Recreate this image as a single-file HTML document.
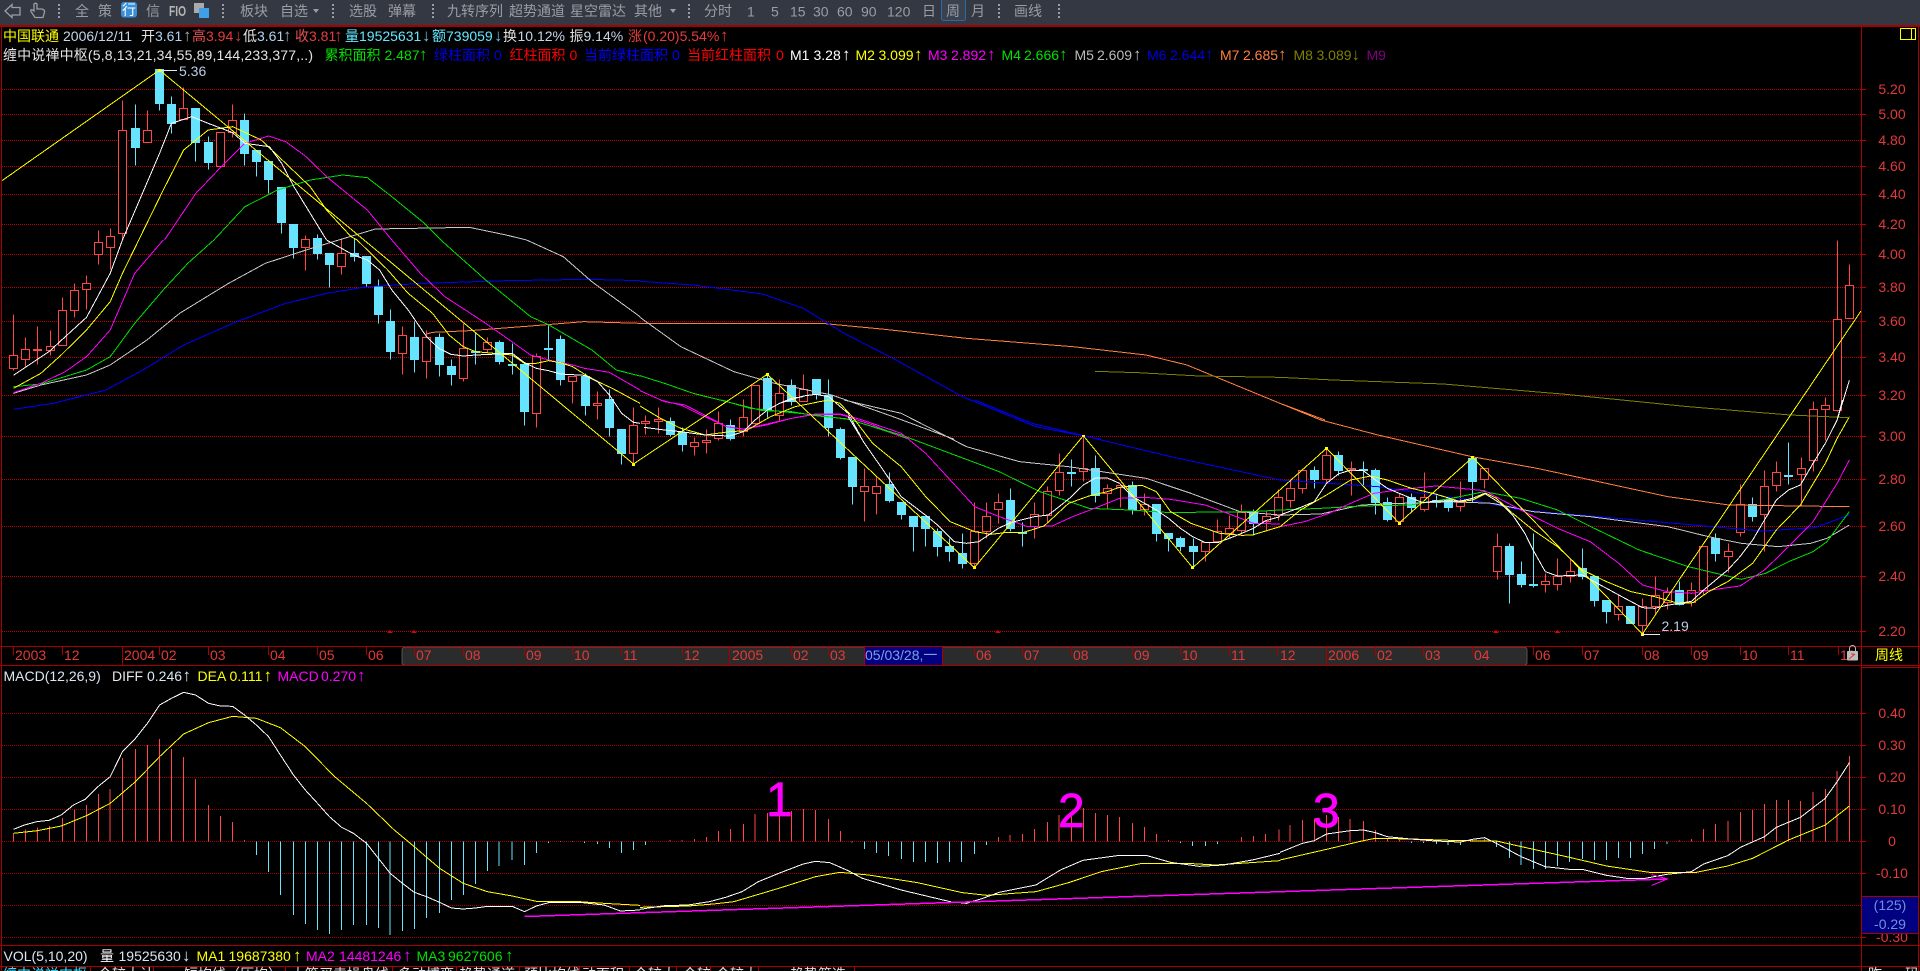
<!DOCTYPE html>
<html><head><meta charset="utf-8"><title>中国联通</title>
<style>
html,body{margin:0;padding:0;background:#000;width:1920px;height:971px;overflow:hidden}
svg{display:block;font-family:"Liberation Sans","Noto Sans CJK SC",sans-serif;font-size:14px}
.l{fill:none;vector-effect:non-scaling-stroke;stroke-width:1;shape-rendering:crispEdges}
.b{fill:none;vector-effect:non-scaling-stroke;stroke-width:1;shape-rendering:crispEdges}
.c{shape-rendering:crispEdges}
.tb text{fill:#9a9da3}
.ax text{fill:#e23a3a}
.yl text{fill:#e23a3a;text-anchor:middle}
.a{font-size:17px}
</style></head><body>
<svg width="1920" height="971" viewBox="0 0 1920 971" xmlns="http://www.w3.org/2000/svg">
<rect width="1920" height="971" fill="#000"/>
<!-- toolbar -->
<rect width="1920" height="25" fill="#343842"/>
<g class="tb">
<path d="M5 11L12 4.500V7.500H20V15H12V17.500Z" fill="none" stroke="#9a9da3" stroke-width="1.300"/>
<path d="M35 17.500L31 11.500Q30 9.500 32 9.800L34 11V4Q35.500 2.500 37 4V9H42Q45 10 44.500 12L43 17.500Z" fill="none" stroke="#9a9da3" stroke-width="1.300"/>
<g stroke="#9a9da3" stroke-width="2" stroke-dasharray="2 2" class="c"><path d="M59 4V18M223 4V18M333 4V18M433 4V18M689 4V18M999 4V18M1059 4V18"/></g>
<text x="75" y="16">全</text><text x="98" y="16">策</text>
<rect x="121" y="2" width="16" height="15.500" rx="3" fill="#3a8fd8"/><text x="122" y="15" style="fill:#fff">行</text>
<text x="146" y="16">信</text>
<text x="169" y="16" font-weight="bold" textLength="17" lengthAdjust="spacingAndGlyphs" style="fill:#b5b5b5;font-size:15px">FIO</text>
<rect x="194" y="3" width="10" height="10" fill="#aaa"/><rect x="199" y="8" width="10" height="10" fill="#3ea0e8"/>
<text x="240" y="16">板块</text><text x="280" y="16">自选</text><path d="M313 9h6l-3 4z" fill="#9a9da3"/>
<text x="349" y="16">选股</text><text x="388" y="16">弹幕</text>
<text x="447" y="16">九转序列</text><text x="509" y="16">超势通道</text><text x="570" y="16">星空雷达</text><text x="634" y="16">其他</text>
<path d="M670 9h6l-3 4z" fill="#9a9da3"/>
<text x="704" y="16">分时</text><text x="747" y="16.500">1</text><text x="771" y="16.500">5</text><text x="790" y="16.500">15</text><text x="813" y="16.500">30</text><text x="837" y="16.500">60</text><text x="861" y="16.500">90</text><text x="887" y="16.500">120</text>
<text x="922" y="16">日</text>
<rect x="941.500" y="-2" width="24" height="22.500" rx="2" fill="#3a4250" stroke="#2d6aa8"/><text x="946" y="16">周</text>
<text x="971" y="16">月</text><text x="1014" y="16">画线</text>
</g>
<!-- time band -->
<rect x="402" y="647" width="1125" height="18.500" rx="3" fill="#2b2b2b" stroke="#555"/>
<rect x="864.500" y="647" width="78" height="18" fill="#000080"/>
<!-- grids -->
<g stroke="#c00000" stroke-dasharray="1 1" class="c" fill="none"><path d="M2 89.500H1861M2 114.500H1861M2 140.500H1861M2 166.500H1861M2 194.500H1861M2 224.500H1861M2 254.500H1861M2 287.500H1861M2 321.500H1861M2 357.500H1861M2 395.500H1861M2 436.500H1861M2 479.500H1861M2 526.500H1861M2 576.500H1861M2 631.500H1861"/></g>
<g stroke="#a00000" stroke-dasharray="1 1" class="c" fill="none"><path d="M2 713.500H1861M2 745.500H1861M2 777.500H1861M2 809.500H1861M2 841.500H1861M2 873.500H1861M2 905.500H1861M2 937.500H1861"/></g>
<g stroke="#c00000" class="c"><path d="M1861 89.500H1866M1861 114.500H1866M1861 140.500H1866M1861 166.500H1866M1861 194.500H1866M1861 224.500H1866M1861 254.500H1866M1861 287.500H1866M1861 321.500H1866M1861 357.500H1866M1861 395.500H1866M1861 436.500H1866M1861 479.500H1866M1861 526.500H1866M1861 576.500H1866M1861 631.500H1866M1861 713.500H1866M1861 745.500H1866M1861 777.500H1866M1861 809.500H1866M1861 841.500H1866M1861 873.500H1866M1861 905.500H1866M1861 937.500H1866"/></g>
<!-- candles -->
<g transform="translate(.5 .5)" class="c">
<path stroke="#ff4545" fill="none" d="M13 314V370M25 337V367M37 326V364M50 330V355M62 297V345M74 283V317M86 275V309M98 230V264M110 228V269M122 100V240M147 110V142M183 87V119M220 132V166M232 104V137M305 235V270M341 238V274M402 326V374M426 330V378M463 323V381M487 337V352M536 353V427M572 376V403M597 391V419M633 407V464M645 415V434M658 407V433M694 437V455M706 429V453M718 411V440M743 399V436M755 385V425M779 379V421M803 374V401M864 468V521M876 476V514M974 502V568M986 502V538M998 493V523M1034 502V538M1047 486V523M1059 453V495M1083 436V481M1107 484V509M1120 484V507M1144 493V515M1205 542V561M1217 519V541M1229 515V538M1241 504V534M1266 511V531M1278 489V520M1290 480V507M1302 468V493M1326 448V483M1351 461V495M1399 493V524M1424 472V511M1460 481V511M1484 468V488M1497 533V579M1545 573V592M1557 558V590M1570 558V582M1618 595V620M1642 598V634M1655 576V614M1667 587V609M1691 582V606M1703 546V595M1728 543V572M1740 484V536M1764 470V551M1776 461V491M1801 457V505M1813 401V471M1825 397V440M1837 240V411M1849 264V318"/>
<path stroke="#ff4545" fill="#000" d="M9 355h8V368h-8zM21 349h8V359h-8zM33 349h8V350h-8zM46 346h8V350h-8zM58 310h8V345h-8zM70 290h8V310h-8zM82 283h8V289h-8zM94 242h8V254h-8zM106 236h8V247h-8zM118 130h8V233h-8zM143 130h8V142h-8zM179 108h8V119h-8zM216 132h8V166h-8zM228 120h8V132h-8zM301 239h8V247h-8zM337 253h8V266h-8zM398 335h8V353h-8zM422 337h8V361h-8zM459 348h8V378h-8zM483 342h8V349h-8zM532 356h8V413h-8zM568 376h8V381h-8zM593 403h8V405h-8zM629 425h8V453h-8zM641 421h8V423h-8zM654 419h8V421h-8zM690 442h8V446h-8zM702 440h8V442h-8zM714 423h8V438h-8zM739 417h8V431h-8zM751 385h8V423h-8zM775 393h8V415h-8zM799 389h8V401h-8zM860 486h8V491h-8zM872 486h8V493h-8zM970 531h8V563h-8zM982 516h8V531h-8zM994 502h8V509h-8zM1030 514h8V526h-8zM1043 491h8V515h-8zM1055 472h8V490h-8zM1079 468h8V471h-8zM1103 488h8V493h-8zM1116 485h8V487h-8zM1140 504h8V509h-8zM1201 542h8V551h-8zM1213 531h8V541h-8zM1225 528h8V533h-8zM1237 512h8V530h-8zM1262 516h8V521h-8zM1274 497h8V515h-8zM1286 488h8V500h-8zM1298 470h8V488h-8zM1322 455h8V479h-8zM1347 468h8V470h-8zM1395 497h8V521h-8zM1420 497h8V509h-8zM1456 502h8V506h-8zM1480 468h8V479h-8zM1493 546h8V571h-8zM1541 581h8V584h-8zM1553 576h8V584h-8zM1566 571h8V576h-8zM1614 606h8V614h-8zM1638 606h8V625h-8zM1651 595h8V606h-8zM1663 592h8V602h-8zM1687 590h8V602h-8zM1699 546h8V590h-8zM1724 551h8V556h-8zM1736 504h8V532h-8zM1760 486h8V514h-8zM1772 472h8V485h-8zM1797 468h8V474h-8zM1809 409h8V460h-8zM1821 405h8V409h-8zM1833 319h8V410h-8zM1845 285h8V318h-8z"/>
<path stroke="#66e3ff" fill="#66e3ff" d="M135 104V165M131 128h8V147h-8zM159 69V110M155 69h8V103h-8zM171 96V133M167 104h8V123h-8zM195 108V161M191 108h8V142h-8zM208 136V169M204 142h8V162h-8zM244 113V165M240 120h8V153h-8zM256 150V176M252 150h8V161h-8zM268 161V193M264 161h8V179h-8zM281 187V233M277 187h8V222h-8zM293 224V258M289 224h8V247h-8zM317 234V259M313 238h8V253h-8zM329 253V287M325 253h8V264h-8zM354 238V261M350 253h8V256h-8zM366 256V287M362 256h8V283h-8zM378 279V323M374 286h8V314h-8zM390 309V359M386 321h8V351h-8zM414 321V372M410 337h8V359h-8zM439 333V376M435 337h8V364h-8zM451 359V385M447 366h8V374h-8zM475 332V364M471 351h8V352h-8zM499 340V364M495 342h8V361h-8zM512 343V374M508 364h8V365h-8zM524 364V425M520 364h8V411h-8zM548 325V360M544 348h8V349h-8zM560 335V385M556 339h8V379h-8zM585 373V415M581 376h8V405h-8zM609 389V436M605 399h8V427h-8zM621 429V464M617 429h8V453h-8zM670 417V436M666 421h8V434h-8zM682 427V451M678 432h8V444h-8zM730 419V440M726 425h8V438h-8zM767 374V417M763 378h8V409h-8zM791 379V405M787 385h8V401h-8zM816 379V399M812 379h8V394h-8zM828 379V436M824 395h8V427h-8zM840 427V459M836 429h8V457h-8zM852 457V504M848 457h8V486h-8zM889 472V502M885 484h8V500h-8zM901 502V519M897 502h8V514h-8zM913 516V551M909 516h8V526h-8zM925 516V546M921 516h8V528h-8zM937 528V556M933 531h8V546h-8zM949 538V561M945 546h8V551h-8zM962 533V568M958 553h8V563h-8zM1010 488V531M1006 500h8V528h-8zM1022 522V546M1018 532h8V533h-8zM1071 459V486M1067 472h8V473h-8zM1095 455V502M1091 468h8V495h-8zM1132 481V514M1128 485h8V509h-8zM1156 504V541M1152 504h8V533h-8zM1168 533V551M1164 533h8V538h-8zM1180 536V551M1176 538h8V546h-8zM1193 538V568M1189 546h8V551h-8zM1253 509V535M1249 512h8V523h-8zM1314 466V488M1310 470h8V479h-8zM1338 451V475M1334 455h8V470h-8zM1363 461V486M1359 469h8V470h-8zM1375 468V514M1371 470h8V502h-8zM1387 497V521M1383 502h8V519h-8zM1411 493V511M1407 497h8V507h-8zM1436 495V507M1432 500h8V502h-8zM1448 497V511M1444 499h8V507h-8zM1472 456V502M1468 458h8V481h-8zM1509 543V603M1505 546h8V574h-8zM1521 561V587M1517 574h8V584h-8zM1533 533V587M1529 584h8V585h-8zM1582 548V579M1578 568h8V576h-8zM1594 576V606M1590 576h8V600h-8zM1606 600V623M1602 600h8V611h-8zM1630 606V623M1626 606h8V623h-8zM1679 581V605M1675 590h8V604h-8zM1715 533V561M1711 538h8V553h-8zM1752 497V521M1748 504h8V516h-8zM1788 442V484M1784 475h8V476h-8z"/>
</g>
<!-- moving averages: groups share the same scale -->
<g transform="matrix(.40816 0 0 .33333 0 0)">
<polyline class="l" stroke="#c8c8c8" points="830,720 920,687 1150,682 1240,705 1290,720"/>
<polyline class="l" stroke="#00e000" points="524,720 600,620 680,570 760,540 840,525 900,533 960,590 1040,670 1080,720"/>
<polyline class="l" stroke="#ff00ff" points="403,720 480,580 550,490 600,430 658,408 700,425 750,470 800,530 900,630 960,720"/>
<polyline class="l" stroke="#ffff00" points="340,720 400,570 450,450 510,390 570,380 640,420 700,490 760,560 800,630 860,710 875,720"/>
<polyline class="l" stroke="#fff" points="300,720 391,460 420,370 470,350 510,370 570,398 600,430 660,440 690,490 720,560 800,720"/>
</g>
<g transform="matrix(.40816 0 0 .33333 0 240)">
<polyline class="l" stroke="#ff7f40" points="1045,282 1060,277 1150,272 1300,258 1430,245 1568,250"/>
<polyline class="l" stroke="#0000ff" points="33,508 130,490 260,450 350,390 450,315 580,245 700,190 800,160 900,140 1040,130 1240,122 1440,118 1568,122"/>
<polyline class="l" stroke="#c8c8c8" points="33,460 100,435 212,405 270,375 360,300 440,220 560,130 650,70 750,30 830,0"/>
<polyline class="l" stroke="#c8c8c8" points="1290,0 1380,50 1450,125 1568,230"/>
<polyline class="l" stroke="#00e000" points="33,440 100,432 212,390 270,350 330,250 400,150 460,70 524,0"/>
<polyline class="l" stroke="#00e000" points="1080,0 1190,120 1300,230 1345,255 1450,330 1510,390 1568,408"/>
<polyline class="l" stroke="#ff00ff" points="33,458 100,430 160,395 212,350 270,270 330,100 400,0"/>
<polyline class="l" stroke="#ff00ff" points="960,0 1030,100 1090,170 1190,250 1260,310 1300,345 1344,360 1403,375 1432,385 1493,397 1568,450"/>
<polyline class="l" stroke="#ffff00" points="33,445 100,400 150,345 212,270 270,185 300,100 340,0"/>
<polyline class="l" stroke="#ffff00" points="875,0 950,90 1000,160 1060,220 1100,285 1135,320 1165,335 1210,340 1255,345 1285,370 1314,370 1344,362 1373,368 1403,380 1435,405 1465,425 1500,445 1568,490"/>
<polyline class="l" stroke="#fff" points="33,406 120,335 160,290 212,232 270,100 300,0"/>
<polyline class="l" stroke="#fff" points="800,0 866,45 900,60 930,90 960,150 1000,210 1045,290 1075,325 1105,343 1135,348 1165,345 1255,340 1285,368 1314,385 1344,392 1373,402 1403,404 1432,406 1464,425 1493,465 1523,520 1552,547 1568,550"/>
</g>
<g transform="matrix(.40816 0 0 .33333 640 240)">
<polyline class="l" stroke="#ff7f40" points="0,250 445,250 600,268 800,295 1060,320 1240,345 1340,375 1568,490"/>
<polyline class="l" stroke="#808000" points="1115,394 1220,398 1370,408 1568,412"/>
<polyline class="l" stroke="#0000ff" points="0,124 130,135 300,162 400,205 500,280 620,355 790,470 970,560 1130,598"/>
<polyline class="l" stroke="#c8c8c8" points="0,232 100,320 230,395 330,430 470,465 620,530 770,598"/>
<polyline class="l" stroke="#00e000" points="0,407 60,430 130,460 212,485 300,512 371,515 430,527 510,537 600,572 660,598"/>
<polyline class="l" stroke="#ff00ff" points="0,452 60,485 110,495 150,520 212,560 253,567 300,555 371,535 430,523 490,523 570,555 640,590"/>
<polyline class="l" stroke="#fff" points="342,490 400,468 430,463 462,470 510,520 541,590"/>
</g>
<g transform="matrix(.40816 0 0 .33333 640 400)">
<polyline class="l" stroke="#0000ff" points="820,0 960,70 1086,107 1300,170 1568,240"/>
<polyline class="l" stroke="#c8c8c8" points="500,0 640,40 800,140 930,185 1050,200 1240,235 1350,280 1470,335 1568,345"/>
<polyline class="l" stroke="#00e000" points="200,0 270,25 350,35 430,45 510,58 640,105 760,160 880,215 980,275 1100,325 1200,330 1300,338 1400,336 1500,335 1568,330"/>
<polyline class="l" stroke="#ff00ff" points="50,0 100,15 150,45 212,80 253,88 310,75 371,55 430,42 490,42 540,58 640,100 700,160 760,240 820,320 880,350 950,380 1010,378 1060,350 1120,322 1175,295 1236,292 1300,298 1385,315 1440,340 1503,370 1568,372"/>
<polyline class="l" stroke="#ffff00" points="0,18 50,55 100,85 160,105 220,95 260,92 320,50 380,20 440,5 462,0 490,10 520,50 570,130 640,200 700,290 760,365 820,395 860,403 900,397 940,397 990,378 1050,310 1100,288 1145,275 1175,262 1230,256 1265,275 1300,335 1350,370 1420,400 1475,406 1500,405 1568,380"/>
<polyline class="l" stroke="#fff" points="10,82 60,90 100,95 160,105 220,108 253,95 282,60 312,30 342,10 371,-5 400,-10"/>
<polyline class="l" stroke="#fff" points="510,50 550,130 590,200 640,290 699,345 729,375 770,425 800,430 830,425 878,385 908,368 966,350 1000,345 1027,320 1057,290 1086,255 1116,234 1145,234 1175,250 1207,290 1265,330 1295,355 1324,385 1354,410 1385,428 1415,428 1444,415 1474,400 1503,385 1533,362 1568,350"/>
</g>
<g transform="matrix(.40816 0 0 .33333 1280 400)">
<polyline class="l" stroke="#ff7f40" points="0,10 100,60 240,105 470,170 630,205 950,290 1100,315 1395,320"/>
<polyline class="l" stroke="#0000ff" points="0,240 120,250 240,260 350,280 470,300 590,330 780,350 1060,380 1180,393 1310,383 1395,345"/>
<polyline class="l" stroke="#c8c8c8" points="0,345 100,342 200,315 300,310 420,305 520,310 620,335 760,350 950,380 1050,410 1130,430 1220,440 1300,430 1340,415 1395,375"/>
<polyline class="l" stroke="#00e000" points="0,330 100,325 200,318 320,315 420,295 500,275 590,295 680,330 770,385 880,450 1000,500 1130,538 1190,520 1246,485 1306,455 1340,425 1395,335"/>
<polyline class="l" stroke="#ff00ff" points="0,380 60,365 120,340 173,310 230,280 300,268 381,258 442,265 501,272 590,330 680,385 760,425 830,490 888,555 948,575 1008,580 1067,568 1127,558 1187,510 1246,440 1306,365 1365,250 1395,180"/>
<polyline class="l" stroke="#ffff00" points="0,380 50,330 114,285 173,240 222,228 263,240 322,265 381,282 442,305 472,300 505,280 530,295 570,340 620,390 680,440 741,510 800,545 860,575 918,590 979,611 1012,608 1050,575 1097,545 1158,490 1216,390 1275,315 1336,190 1365,115 1395,50"/>
<polyline class="l" stroke="#fff" points="0,345 55,320 84,305 114,250 143,222 173,210 204,212 234,240 263,265 292,280 322,295 351,308 381,303 413,303 442,303 472,295 501,280 540,310 570,345 600,400 620,450 650,515 680,528 741,525 770,545 830,585 888,623 918,625 948,616 1008,604 1038,570 1097,510 1127,470 1158,420 1187,360 1216,300 1246,270 1275,255 1306,190 1336,130 1365,60 1378,0"/>
</g>
<g transform="matrix(.40816 0 0 .33333 1280 220)">
<polyline class="l" stroke="#ff7f40" points="0,550 110,600"/>
<polyline class="l" stroke="#808000" points="0,472 130,480 400,492 700,523 1000,560 1250,585 1395,593"/>
<polyline class="l" stroke="#fff" points="1365,600 1395,481"/>
</g>
<!-- zigzag -->
<polyline class="c" fill="none" stroke="#ffff00" points="1.500,181 159.500,70 633.500,464 767.300,374.300 974.300,567.700 1083.300,435.700 1192.700,567.700 1326.500,448.300 1399.200,523 1472.700,457.300 1642.400,634 1861,311"/>
<g fill="#ffff00" class="c"><rect x="158" y="69" width="3" height="3"/><rect x="632" y="463" width="3" height="3"/><rect x="766" y="373" width="3" height="3"/><rect x="973" y="566" width="3" height="3"/><rect x="1082" y="435" width="3" height="2"/><rect x="1191" y="566" width="3" height="3"/><rect x="1325" y="447" width="3" height="3"/><rect x="1398" y="522" width="3" height="3"/><rect x="1471" y="456" width="3" height="3"/><rect x="1641" y="633" width="3" height="3"/></g>
<path d="M159 70.500H177M1642 634.500H1660" stroke="#e8e8e8" class="c"/>
<text x="179" y="76" fill="#b8cde6">5.36</text>
<text x="1661.500" y="631" fill="#b8cde6">2.19</text>
<g fill="#e00000"><path d="M998 630l3 3h-6zM1496 630l3 3h-6zM1557.500 630l3 3h-6zM390 630l3 3h-6zM414 630l3 3h-6z"/></g>
<!-- MACD bars -->
<g transform="matrix(.40816 0 0 .33333 0 640)">
<path class="b" stroke="#ff4545" d="M33 604V580M62 604V568M92 604V562M121 604V558M153 604V534M182 604V510M212 604V495M241 604V462M270 604V447M300 604V354M332 604V327M361 604V315M391 604V297M420 604V327M450 604V351M479 604V417M511 604V495M540 604V528M570 604V546M599 604V600"/>
<path class="b" stroke="#66e3ff" d="M628 604V645M658 604V696M687 604V765M719 604V825M748 604V852M778 604V870M807 604V882M837 604V870M866 604V855M898 604V855M927 604V864M956 604V885M986 604V873M1015 604V867M1045 604V834M1077 604V819M1106 604V780M1135 604V765M1165 604V732M1194 604V693M1223 604V678M1255 604V660M1285 604V675M1314 604V639M1344 604V609M1373 604V606M1403 604V606M1432 604V609M1464 604V612M1493 604V624M1523 604V639M1552 604V630"/>
<polyline class="l" stroke="#ffff00" points="33,580 92,572 150,558 212,527 270,490 332,425 391,350 450,282 511,248 570,229 628,235 687,263 748,320 820,410 898,490 966,570 1015,620 1077,685 1135,730 1194,755 1255,768 1314,784 1420,785 1480,790 1568,796"/>
<polyline class="l" stroke="#fff" points="33,568 60,555 90,545 120,541 150,525 180,495 210,477 240,440 270,410 300,335 332,295 361,250 391,195 420,175 450,157 479,165 511,190 540,198 570,199 599,225 628,255 658,290 687,345 719,405 748,450 778,490 807,530 837,562 866,580 898,610 927,655 956,700 986,730 1015,757 1045,770 1077,787 1106,804 1135,807 1165,804 1194,799 1255,799 1285,815 1314,798 1344,788 1420,787 1480,795 1520,813 1568,810"/>
</g>
<g transform="matrix(.40816 0 0 .33333 640 700)">
<path class="b" stroke="#ff4545" d="M74 424V420M103 424V420M133 424V417M163 424V411M192 424V393M222 424V387M253 424V372M282 424V342M312 424V339M342 424V330M371 424V333M401 424V327M430 424V330M462 424V357M491 424V393M878 424V411M907 424V405M937 424V402M966 424V387M998 424V366M1027 424V345M1057 424V350M1086 424V324M1116 424V339M1145 424V345M1175 424V351M1207 424V369M1236 424V381M1265 424V402M1295 424V420M1474 424V411M1503 424V408M1533 424V402M1565 424V388"/>
<path class="b" stroke="#66e3ff" d="M13 424V435M520 424V427M550 424V447M579 424V459M609 424V468M641 424V477M670 424V486M699 424V486M729 424V489M758 424V486M788 424V486M819 424V462M849 424V435M1324 424V429M1354 424V438M1385 424V438M1415 424V432"/>
<polyline class="l" stroke="#ffff00" points="0,622 118,618 180,612 230,605 340,565 430,530 490,517 560,525 680,548 790,578 850,586 970,575 1050,548 1130,515 1230,490 1340,490 1410,495 1568,482"/>
<polyline class="l" stroke="#fff" points="0,628 60,617 118,615 170,605 210,592 250,575 290,545 340,520 400,492 430,484 465,488 510,512 545,535 640,570 760,605 800,610 840,595 880,577 970,555 1030,510 1085,481 1175,466 1240,466 1300,487 1370,499 1430,495 1500,480 1568,460"/>
</g>
<g transform="matrix(.40816 0 0 .33333 1280 640)">
<path class="b" stroke="#ff4545" d="M25 604V555M55 604V540M84 604V537M114 604V525M143 604V531M172 604V537M204 604V543M234 604V570M263 604V597M293 604V600M472 604V600M501 604V597M979 604V602M1008 604V597M1038 604V567M1067 604V552M1097 604V543M1128 604V516M1158 604V510M1187 604V492M1216 604V480M1246 604V480M1275 604V483M1306 604V456M1336 604V447M1365 604V393M1395 604V348"/>
<path class="b" stroke="#66e3ff" d="M322 604V609M351 604V609M383 604V612M412 604V615M442 604V615M530 604V621M562 604V654M591 604V675M621 604V687M650 604V687M680 604V678M709 604V666M741 604V657M770 604V660M800 604V660M829 604V654M859 604V654M888 604V642M918 604V627M948 604V612"/>
<polyline class="l" stroke="#ffff00" points="0,660 114,628 204,602 234,595 320,597 442,602 530,603 621,628 709,652 800,678 905,697 1020,697 1097,678 1158,655 1246,600 1336,555 1395,498"/>
<polyline class="l" stroke="#fff" points="0,637 55,610 84,602 114,582 172,572 204,570 234,578 263,590 320,597 380,603 442,606 472,598 501,593 530,610 591,650 650,680 709,688 741,688 800,706 855,716 890,716 948,703 1008,695 1038,672 1097,647 1128,622 1187,590 1216,562 1275,532 1336,475 1365,425 1395,368"/>
</g>
<path d="M524.500 916.500L1666 879" stroke="#ff00ff" stroke-width="1.500" fill="none" class="c"/>
<path d="M1651.500 874.500L1667.500 879L1651.500 885.500" stroke="#ff00ff" fill="none" class="c"/>
<g fill="#ff00ff" stroke="#ff00ff" stroke-width=".7"><text x="766" y="816" style="font-size:48px">1</text><text x="1058" y="827" style="font-size:48px">2</text><text x="1313" y="827" style="font-size:48px">3</text></g>
<!-- frame lines -->
<g stroke="#a80000" class="c" fill="none">
<path d="M0 26H1920" stroke-width="2"/>
<path d="M1.500 26V971M1918.500 26V971M1861.500 26V971"/>
<path d="M0 646.500H1920M0 665.500H1920M1861 667.500H1920M0 945.500H1920M0 966.500H1920M1861 896.500H1918M1861 933.500H1918"/>
</g>
<!-- axis labels -->
<g class="yl">
<text x="1892" y="94">5.20</text><text x="1892" y="119">5.00</text><text x="1892" y="145">4.80</text><text x="1892" y="171">4.60</text><text x="1892" y="199">4.40</text><text x="1892" y="229">4.20</text><text x="1892" y="259">4.00</text><text x="1892" y="292">3.80</text><text x="1892" y="326">3.60</text><text x="1892" y="362">3.40</text><text x="1892" y="400">3.20</text><text x="1892" y="441">3.00</text><text x="1892" y="484">2.80</text><text x="1892" y="531">2.60</text><text x="1892" y="581">2.40</text><text x="1892" y="636">2.20</text>
<text x="1892" y="718">0.40</text><text x="1892" y="750">0.30</text><text x="1892" y="782">0.20</text><text x="1892" y="814">0.10</text><text x="1892" y="846">0</text><text x="1892" y="878">-0.10</text><text x="1892" y="942">-0.30</text>
</g>
<rect x="1862" y="897" width="56" height="36" fill="#000080"/>
<path d="M1861 896.500H1918M1861 933.500H1918" stroke="#a80000" class="c"/>
<text x="1890" y="910" text-anchor="middle" fill="#7090dc">(125)</text>
<text x="1890" y="929" text-anchor="middle" fill="#7090dc">-0.29</text>
<rect x="1900.500" y="28.500" width="15" height="11" fill="none" stroke="#ffff00" class="c"/><path d="M1911.500 28V40" stroke="#ffff00" class="c"/>
<!-- time axis -->
<g stroke="#a80000" class="c"><path d="M13.500 647V655M62.500 647V655M122.500 647V665M159.500 647V655M208.500 647V655M268.500 647V655M317.500 647V655M366.500 647V655M414.500 647V655M463.500 647V655M524.500 647V655M572.500 647V655M621.500 647V655M682.500 647V655M729.500 647V665M791.500 647V655M828.500 647V655M974.500 647V655M1022.500 647V655M1071.500 647V655M1132.500 647V655M1180.500 647V655M1229.500 647V655M1277.500 647V655M1326.500 647V665M1375.500 647V655M1423.500 647V655M1472.500 647V655M1533.500 647V655M1582.500 647V655M1642.500 647V655M1691.500 647V655M1740.500 647V655M1788.500 647V655M1838.500 647V655M864.500 647V665M942.500 647V665"/></g>
<g class="ax">
<text x="15" y="660">2003</text><text x="64" y="660">12</text><text x="124" y="660">2004</text><text x="161" y="660">02</text><text x="210" y="660">03</text><text x="270" y="660">04</text><text x="319" y="660">05</text><text x="368" y="660">06</text><text x="416" y="660">07</text><text x="465" y="660">08</text><text x="526" y="660">09</text><text x="574" y="660">10</text><text x="623" y="660">11</text><text x="684" y="660">12</text><text x="732" y="660">2005</text><text x="793" y="660">02</text><text x="830" y="660">03</text><text x="976" y="660">06</text><text x="1024" y="660">07</text><text x="1073" y="660">08</text><text x="1134" y="660">09</text><text x="1182" y="660">10</text><text x="1231" y="660">11</text><text x="1280" y="660">12</text><text x="1328" y="660">2006</text><text x="1377" y="660">02</text><text x="1425" y="660">03</text><text x="1474" y="660">04</text><text x="1535" y="660">06</text><text x="1584" y="660">07</text><text x="1644" y="660">08</text><text x="1693" y="660">09</text><text x="1742" y="660">10</text><text x="1790" y="660">11</text><text x="1840" y="660">12</text>
</g>
<text x="865" y="660" fill="#7da0e0">05/03/28,一</text>
<rect x="1847" y="651" width="11" height="9.500" rx="1" fill="#bdbdbd"/><path d="M1849.500 651v-2.500a3 3 0 0 1 6 0v2.500" fill="none" stroke="#bdbdbd"/><path d="M1849 659l6-5M1851 654h3" stroke="#e03030"/>
<text x="1875" y="660" fill="#ffff00">周线</text>
<!-- title lines -->
<g>
<text x="3" y="41" fill="#ffff00">中国联通</text>
<text x="63" y="41" fill="#c6d6ea">2006/12/11</text>
<text x="141" y="41" fill="#e0e0e0">开</text><text x="155" y="41" fill="#b4d4f0">3.61</text><text class="a" x="183" y="41" fill="#9aa8b8">↑</text>
<text x="192" y="41" fill="#e85050">高</text><text x="206" y="41" fill="#e83c3c">3.94</text><text class="a" x="234" y="41" fill="#c04040">↓</text>
<text x="243" y="41" fill="#e0e0e0">低</text><text x="257" y="41" fill="#b4d4f0">3.61</text><text class="a" x="283" y="41" fill="#9aa8b8">↑</text>
<text x="295" y="41" fill="#e85050">收</text><text x="309" y="41" fill="#e83c3c">3.81</text><text class="a" x="334" y="41" fill="#c04040">↑</text>
<text x="345" y="41" fill="#66e6ff">量</text><text x="359" y="41" fill="#66e6ff">19525631</text><text class="a" x="422" y="41" fill="#66c0d8">↓</text>
<text x="432" y="41" fill="#66e6ff">额</text><text x="446" y="41" fill="#66e6ff">739059</text><text class="a" x="494" y="41" fill="#66c0d8">↓</text>
<text x="503" y="41" fill="#e0e0e0">换</text><text x="517.500" y="41" fill="#c6d6ea">10.12%</text>
<text x="569.500" y="41" fill="#e0e0e0">振</text><text x="583.500" y="41" fill="#c6d6ea">9.14%</text>
<text x="628" y="41" fill="#e83c3c">涨</text><text x="643" y="41" fill="#e83c3c">(0.20)5.54%</text><text class="a" x="720" y="41" fill="#e83c3c">↑</text>

<text x="3" y="60" fill="#e4e4e4" textLength="310">缠中说禅中枢(5,8,13,21,34,55,89,144,233,377,..)</text>
<text x="324.500" y="60" fill="#00e000">累积面积</text><text x="384.500" y="60" fill="#00e000">2.487</text><text class="a" x="419" y="60" fill="#00e000">↑</text>
<text x="434" y="60" fill="#0000e8">绿柱面积</text><text x="494" y="60" fill="#0000e8">0</text>
<text x="509.500" y="60" fill="#ff0000">红柱面积</text><text x="569.500" y="60" fill="#ff0000">0</text>
<text x="584" y="60" fill="#0000ff">当前绿柱面积</text><text x="672" y="60" fill="#0000ff">0</text>
<text x="687" y="60" fill="#ff0000">当前红柱面积</text><text x="776" y="60" fill="#ff0000">0</text>
<text x="790" y="60" fill="#fff">M1</text><text x="813.500" y="60" fill="#fff">3.28</text><text class="a" x="842" y="60" fill="#fff">↑</text>
<text x="855.500" y="60" fill="#ffff00">M2</text><text x="878.500" y="60" fill="#ffff00">3.099</text><text class="a" x="914" y="60" fill="#ffff00">↑</text>
<text x="928" y="60" fill="#ff00ff">M3</text><text x="951" y="60" fill="#ff00ff">2.892</text><text class="a" x="987" y="60" fill="#ff00ff">↑</text>
<text x="1001.500" y="60" fill="#00e000">M4</text><text x="1024" y="60" fill="#00e000">2.666</text><text class="a" x="1059" y="60" fill="#00e000">↑</text>
<text x="1074.500" y="60" fill="#bbb">M5</text><text x="1097" y="60" fill="#bbb">2.609</text><text class="a" x="1133" y="60" fill="#bbb">↑</text>
<text x="1147" y="60" fill="#0000e0">M6</text><text x="1170" y="60" fill="#0000e0">2.644</text><text class="a" x="1205" y="60" fill="#0000e0">↑</text>
<text x="1220" y="60" fill="#ff7f40">M7</text><text x="1243" y="60" fill="#ff7f40">2.685</text><text class="a" x="1278" y="60" fill="#ff7f40">↑</text>
<text x="1293.500" y="60" fill="#808000">M8</text><text x="1316.500" y="60" fill="#808000">3.089</text><text class="a" x="1351.500" y="60" fill="#808000">↓</text>
<text x="1366.500" y="60" fill="#800080">M9</text>

<text x="3.500" y="681" fill="#dce6f2">MACD(12,26,9)</text>
<text x="112" y="681" fill="#e8e8e8">DIFF</text><text x="147" y="681" fill="#dce6f2">0.246</text><text class="a" x="182.500" y="681" fill="#dce6f2">↑</text>
<text x="197.500" y="681" fill="#ffff00">DEA</text><text x="229.500" y="681" fill="#ffff00">0.111</text><text class="a" x="263.500" y="681" fill="#ffff00">↑</text>
<text x="277.500" y="681" fill="#ff00ff">MACD</text><text x="321" y="681" fill="#ff00ff">0.270</text><text class="a" x="357" y="681" fill="#ff00ff">↑</text>

<text x="3.500" y="961" fill="#dce6f2">VOL(5,10,20)</text>
<text x="100" y="961" fill="#fff">量</text><text x="118.500" y="961" fill="#dce6f2">19525630</text><text class="a" x="182" y="961" fill="#dce6f2">↓</text>
<text x="196.500" y="961" fill="#ffff00">MA1</text><text x="228.500" y="961" fill="#ffff00">19687380</text><text class="a" x="293" y="961" fill="#ffff00">↑</text>
<text x="306" y="961" fill="#ff00ff">MA2</text><text x="339" y="961" fill="#ff00ff">14481246</text><text class="a" x="403" y="961" fill="#ff00ff">↑</text>
<text x="416.500" y="961" fill="#00e000">MA3</text><text x="448" y="961" fill="#00e000">9627606</text><text class="a" x="505" y="961" fill="#00e000">↑</text>
</g>
<!-- bottom tabs -->
<g fill="#e0e0e0">
<text x="3" y="979" fill="#33e0ff">缠中说禅中枢</text><text x="98" y="979">今较大计</text><text x="184" y="979">短均线（压均）</text><text x="291" y="979">大笔买卖操盘线</text><text x="398" y="979">多动博弈</text><text x="459" y="979">趋势通道</text><text x="524" y="979">预比均线</text><text x="582" y="979">动面积</text><text x="634" y="979">今较大</text><text x="683" y="979">今较</text><text x="716" y="979">今较大</text><text x="790" y="979">趋势筛选</text>
<text x="1868" y="979">昨</text><text x="1905" y="979">码</text>
</g>
<path d="M90.500 966V971M153.500 966V971M285.500 966V971M392.500 966V971M456.500 966V971M519.500 966V971M579.500 966V971M629.500 966V971M676.500 966V971M710.500 966V971M758.500 966V971M854.500 966V971" stroke="#a80000" class="c"/>
</svg>
</body></html>
